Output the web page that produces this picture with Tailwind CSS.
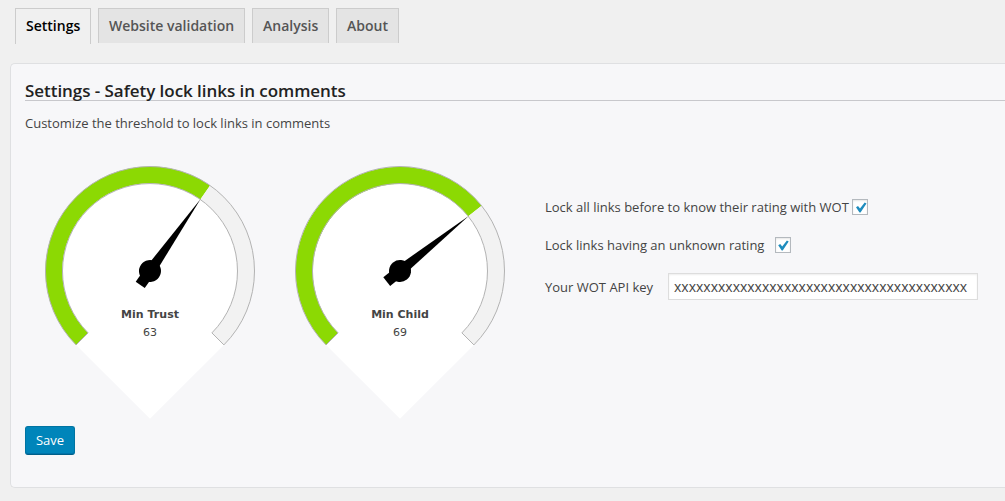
<!DOCTYPE html>
<html lang="en">
<head>
<meta charset="utf-8">
<title>Settings</title>
<script src="https://cdn.jsdelivr.net/npm/@tailwindcss/browser@4"></script>
</head>
<body class="h-[501px] overflow-hidden bg-[#f0f0f0] pt-2 font-['Open_Sans',sans-serif] text-[13px] text-[#444]">
<nav class="flex h-[36px] gap-[7px] pl-[15px] text-[14px] leading-[34px] font-semibold whitespace-nowrap text-[#555]">
  <a class="h-[36px] w-[76px] border border-b-0 border-[#ccc] pl-[10px] text-black">Settings</a>
  <a class="h-[35px] w-[147px] border border-b-0 border-[#ccc] bg-[#e4e4e4] pl-[10px]">Website validation</a>
  <a class="h-[35px] w-[77px] border border-b-0 border-[#ccc] bg-[#e4e4e4] pl-[10px]">Analysis</a>
  <a class="h-[35px] w-[63px] border border-b-0 border-[#ccc] bg-[#e4e4e4] pl-[10px]">About</a>
</nav>
<main class="mt-[19px] ml-[10px] h-[425px] rounded-l-[5px] border border-r-0 border-[#dfe0e2] bg-[#f7f7f9] pt-[15px] pl-[14px]">
  <h1 class="h-[22px] border-b border-[#c8c8cc] text-[17px] leading-[24px] font-semibold tracking-[-0.05px] whitespace-nowrap text-[#222]">Settings - Safety lock links in comments</h1>
  <p class="mt-[12px] leading-[20px]">Customize the threshold to lock links in comments</p>
  <div class="mt-[23px] flex">
    <svg class="h-[270px] w-[250px] shrink-0" viewBox="25 156 250 270">
      <path fill="#fff" d="M76.1 344.9A104.5 104.5 0 1 1 223.9 344.9L150 418.8Z"/>
      <path fill="#8cd903" d="M76.1 344.9A104.5 104.5 0 0 1 210.1 185.5L200.3 199.4A87.5 87.5 0 0 0 88.1 332.9Z"/>
      <path fill="#f2f2f2" d="M210.1 185.5A104.5 104.5 0 0 1 223.9 344.9L211.9 332.9A87.5 87.5 0 0 0 200.3 199.4Z"/>
      <path fill="none" stroke="#b3b3b3" d="M76.1 344.9A104.5 104.5 0 1 1 223.9 344.9L211.9 332.9A87.5 87.5 0 1 0 88.1 332.9Z"/>
      <g transform="translate(150 271) rotate(-54.9)"><path d="M-17-5.5H0L88 0 0 5.5H-17Z"/><circle r="11"/></g>
      <text x="150" y="318" text-anchor="middle" fill="#444" font-size="11" font-weight="700" font-family="DejaVu Sans" textLength="58">Min Trust</text>
      <text x="150" y="336" text-anchor="middle" fill="#444" font-size="11" font-family="DejaVu Sans">63</text>
    </svg>
    <svg class="h-[270px] w-[250px] shrink-0" viewBox="25 156 250 270">
      <path fill="#fff" d="M76.1 344.9A104.5 104.5 0 1 1 223.9 344.9L150 418.8Z"/>
      <path fill="#8cd903" d="M76.1 344.9A104.5 104.5 0 1 1 231.6 205.7L218.3 216.3A87.5 87.5 0 1 0 88.1 332.9Z"/>
      <path fill="#f2f2f2" d="M231.6 205.7A104.5 104.5 0 0 1 223.9 344.9L211.9 332.9A87.5 87.5 0 0 0 218.3 216.3Z"/>
      <path fill="none" stroke="#b3b3b3" d="M76.1 344.9A104.5 104.5 0 1 1 223.9 344.9L211.9 332.9A87.5 87.5 0 1 0 88.1 332.9Z"/>
      <g transform="translate(150 271) rotate(-38.7)"><path d="M-17-5.5H0L88 0 0 5.5H-17Z"/><circle r="11"/></g>
      <text x="150" y="318" text-anchor="middle" fill="#444" font-size="11" font-weight="700" font-family="DejaVu Sans">Min Child</text>
      <text x="150" y="336" text-anchor="middle" fill="#444" font-size="11" font-family="DejaVu Sans">69</text>
    </svg>
    <div class="flex flex-col pt-[41px] pl-[20px] whitespace-nowrap">
      <div class="flex h-5 items-center">
        <span class="w-[307px] pt-0.5">Lock all links before to know their rating with WOT</span>
        <span class="h-4 w-4 border border-[#b4b9be] bg-white shadow-[inset_0_1px_2px_rgba(0,0,0,0.1)]"><svg class="h-[14px] w-[14px]" viewBox="0 0 14 14"><path fill="#1e8cbe" d="M3 7.3 5 5.9 7 8.6 11.7 2.4 13.5 3.6 7.5 12.5 6.5 12.5Z"/></svg></span>
      </div>
      <div class="mt-[18px] flex h-5 items-center">
        <span class="w-[230px] pt-0.5">Lock links having an unknown rating</span>
        <span class="h-4 w-4 border border-[#b4b9be] bg-white shadow-[inset_0_1px_2px_rgba(0,0,0,0.1)]"><svg class="h-[14px] w-[14px]" viewBox="0 0 14 14"><path fill="#1e8cbe" d="M2.2 7.3 4.2 5.9 6.2 8.6 10.9 2.4 12.7 3.6 6.7 12.5 5.7 12.5Z"/></svg></span>
      </div>
      <div class="mt-[18px] flex h-[27px] items-center">
        <span class="w-[123px] pt-0.5">Your WOT API key</span>
        <span class="h-[27px] w-[310px] border border-[#ddd] bg-white pl-[5px] text-[14px] leading-[26px] shadow-[inset_0_1px_2px_rgba(0,0,0,0.07)]">xxxxxxxxxxxxxxxxxxxxxxxxxxxxxxxxxxxxxxxx</span>
      </div>
    </div>
  </div>
  <button class="block h-[29px] w-[50px] rounded-[3px] border border-[#0074a2] border-b-[#005f88] bg-[#0085ba] pb-px text-[13px] leading-[26px] text-white shadow-[inset_0_-1px_0_#0073aa]">Save</button>
</main>
</body>
</html>
